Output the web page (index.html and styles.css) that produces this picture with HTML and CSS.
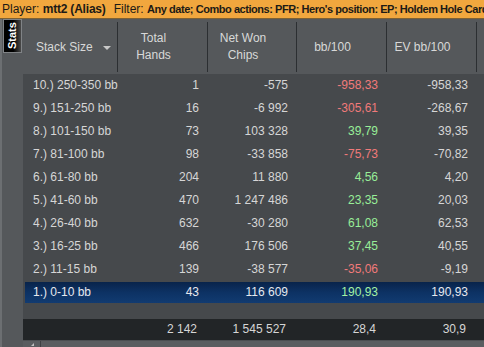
FILE: index.html
```html
<!DOCTYPE html>
<html>
<head>
<meta charset="utf-8">
<link rel="stylesheet" href="styles.css">
</head>
<body>
<div class="topbar"><span>Player: </span><b class="val v1">mtt2 (Alias)</b><span class="flabel">Filter: </span><b class="val v2">Any date; Combo actions: PFR; Hero's position: EP; Holdem Hole Cards: Any</b></div>
<div class="main">
  <div class="side"><div class="tab">Stats</div></div>
  <div class="table">
    <div class="head">
      <div class="hc first"><span>Stack Size</span><span class="arrow"></span></div>
      <div class="hc">Total<br>Hands</div>
      <div class="hc">Net Won<br>Chips</div>
      <div class="hc">bb/100</div>
      <div class="hc">EV bb/100</div>
      <div class="hc rest"></div>
    </div>
    <div class="body">
      <div class="row"><div class="c l">10.) 250-350 bb</div><div class="c">1</div><div class="c">-575</div><div class="c red">-958,33</div><div class="c">-958,33</div></div>
      <div class="row"><div class="c l">9.) 151-250 bb</div><div class="c">16</div><div class="c">-6 992</div><div class="c red">-305,61</div><div class="c">-268,67</div></div>
      <div class="row"><div class="c l">8.) 101-150 bb</div><div class="c">73</div><div class="c">103 328</div><div class="c green">39,79</div><div class="c">39,35</div></div>
      <div class="row"><div class="c l">7.) 81-100 bb</div><div class="c">98</div><div class="c">-33 858</div><div class="c red">-75,73</div><div class="c">-70,82</div></div>
      <div class="row"><div class="c l">6.) 61-80 bb</div><div class="c">204</div><div class="c">11 880</div><div class="c green">4,56</div><div class="c">4,20</div></div>
      <div class="row"><div class="c l">5.) 41-60 bb</div><div class="c">470</div><div class="c">1 247 486</div><div class="c green">23,35</div><div class="c">20,03</div></div>
      <div class="row"><div class="c l">4.) 26-40 bb</div><div class="c">632</div><div class="c">-30 280</div><div class="c green">61,08</div><div class="c">62,53</div></div>
      <div class="row"><div class="c l">3.) 16-25 bb</div><div class="c">466</div><div class="c">176 506</div><div class="c green">37,45</div><div class="c">40,55</div></div>
      <div class="row"><div class="c l">2.) 11-15 bb</div><div class="c">139</div><div class="c">-38 577</div><div class="c red">-35,06</div><div class="c">-9,19</div></div>
      <div class="row sel"><div class="c l">1.) 0-10 bb</div><div class="c">43</div><div class="c">116 609</div><div class="c green">190,93</div><div class="c">190,93</div></div>
      <div class="spacer"></div>
    </div>
    <div class="total"><div class="c l"></div><div class="c">2 142</div><div class="c">1 545 527</div><div class="c">28,4</div><div class="c">30,9</div></div>
    <div class="scroll"><span class="sarrow"></span><span class="sdiv"></span></div>
  </div>
</div>
</body>
</html>
```
FILE: styles.css
```css
html, body {
  margin: 0;
  padding: 0;
}
body {
  width: 484px;
  height: 347px;
  overflow: hidden;
  background: #55585b;
  font-family: "Liberation Sans", Arial, sans-serif;
  font-size: 12px;
  color: #d6d6d6;
}
.topbar {
  height: 18px;
  line-height: 18px;
  background: #f1a73e;
  border-bottom: 1px solid #7d6134;
  color: #1c1a16;
  padding-left: 2px;
  white-space: nowrap;
  overflow: hidden;
}
.val {
  font-weight: bold;
}
.v1 {
  letter-spacing: -0.2px;
}
.v2 {
  font-size: 11px;
  letter-spacing: -0.45px;
}
.flabel {
  margin-left: 8px;
}
.main {
  display: flex;
  height: 328px;
}
.side {
  width: 23px;
  flex: none;
  box-sizing: border-box;
  border-left: 2px solid #6c6f72;
  background: #55585b;
}
.tab {
  box-sizing: border-box;
  margin-left: 1px;
  width: 19px;
  height: 34px;
  border: 1px solid #808386;
  background: linear-gradient(to left, #000 0%, #000 55%, #4a4a4a 100%);
  writing-mode: vertical-rl;
  transform: rotate(180deg);
  color: #fff;
  font-weight: bold;
  font-size: 11px;
  text-align: center;
  line-height: 17px;
}
.table {
  flex: 1;
  display: flex;
  flex-direction: column;
  min-width: 0;
}
.head {
  height: 56px;
  box-sizing: border-box;
  padding-top: 3px;
  display: grid;
  grid-template-columns: 95px 90px 89px 90px 90px 1fr;
  background: #55585b;
}
.hc {
  height: 50px;
  border-right: 1px solid #2c2f32;
  display: flex;
  align-items: center;
  justify-content: center;
  text-align: center;
  padding-right: 18px;
  line-height: 17px;
  color: #d8d8d8;
}
.hc.first {
  justify-content: flex-start;
  padding-left: 13px;
  padding-right: 0;
}
.hc.rest {
  border-right: none;
}
.arrow {
  width: 0;
  height: 0;
  border-left: 4px solid transparent;
  border-right: 4px solid transparent;
  border-top: 4px solid #c8c8c8;
  margin-left: 10px;
  margin-top: 1px;
}
.body {
  background: #46494c;
  padding-left: 2px;
}
.row {
  display: grid;
  grid-template-columns: 93px 90px 89px 90px 90px 1fr;
  height: 23px;
  line-height: 23px;
  white-space: nowrap;
}
.c {
  text-align: right;
  padding-right: 9px;
  overflow: hidden;
}
.c.l {
  text-align: left;
  padding-left: 8px;
  padding-right: 0;
  text-overflow: clip;
}
.red {
  color: #f07a7a;
}
.green {
  color: #98ee98;
}
.sel {
  background: linear-gradient(#082248, #0d3264 50%, #123c72);
  background-clip: content-box;
  padding: 1px 0;
  box-sizing: border-box;
  line-height: 21px;
  color: #e6e8ee;
}
.sel .green {
  color: #a4f2a4;
}
.spacer {
  height: 15px;
  margin-left: -2px;
}
.total {
  display: grid;
  grid-template-columns: 95px 90px 89px 90px 90px 1fr;
  height: 21px;
  line-height: 21px;
  background: #222527;
  color: #d6d6d6;
}
.total .c {
  padding-right: 11px;
}
.scroll {
  height: 7px;
  background: #5a5d60;
  border-top: 1px solid #4b4e51;
  box-sizing: border-box;
  display: flex;
  align-items: flex-end;
}
.sarrow {
  width: 0;
  height: 0;
  border-left: 3px solid transparent;
  border-right: 0 solid transparent;
  border-bottom: 3px solid #c0c0c0;
  margin-left: 8px;
  margin-bottom: 1px;
}
.sdiv {
  width: 1px;
  height: 6px;
  background: #3e4144;
  margin-left: 6px;
}
```
